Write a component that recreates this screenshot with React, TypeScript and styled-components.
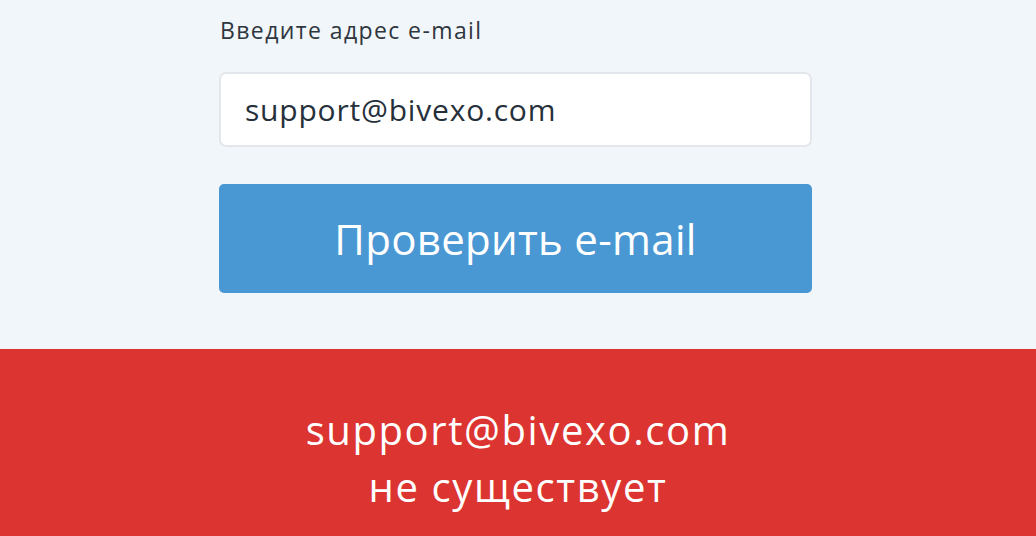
import React, { useState } from "react";
import styled, { createGlobalStyle } from "styled-components";

const GlobalStyle = createGlobalStyle`
  html, body {
    margin: 0;
    padding: 0;
    background: #f1f6fa;
    font-family: "Open Sans", "Liberation Sans", sans-serif;
  }
`;

const App: React.FC = () => {
  const [email, setEmail] = useState("support@bivexo.com");

  return (
    <>
      <GlobalStyle />
      <Page>
        <FormWrap>
          <Label htmlFor="email">Введите адрес e-mail</Label>
          <Input id="email" value={email} onChange={(e) => setEmail(e.target.value)} />
          <Button type="button">Проверить e-mail</Button>
        </FormWrap>
        <ErrorBar>
          <ErrorText>
            support@bivexo.com
            <br />
            не существует
          </ErrorText>
        </ErrorBar>
      </Page>
    </>
  );
};

export default App;

const Page = styled.div`
  width: 1036px;
  height: 536px;
  display: flex;
  flex-direction: column;
  overflow: hidden;
`;

const FormWrap = styled.div`
  width: 593px;
  margin-left: 219px;
  padding-top: 14px;
  display: flex;
  flex-direction: column;
  height: 349px;
  box-sizing: border-box;
`;

const Label = styled.label`
  font-size: 23px;
  line-height: 32px;
  letter-spacing: 1.4px;
  color: #2f3640;
  padding-left: 1px;
  margin-bottom: 26px;
`;

const Input = styled.input`
  box-sizing: border-box;
  height: 75px;
  width: 100%;
  border: 2px solid #e3e7eb;
  border-radius: 7px;
  background: #fff;
  padding: 0 24px;
  font-family: inherit;
  font-size: 30px;
  letter-spacing: 0.8px;
  color: #26303b;
  outline: none;
  margin-bottom: 37px;
`;

const Button = styled.button`
  height: 109px;
  width: 100%;
  border: none;
  border-radius: 5px;
  background: #4a98d3;
  color: #fff;
  font-family: inherit;
  font-size: 42px;
  letter-spacing: 0.3px;
  cursor: pointer;
`;

const ErrorBar = styled.div`
  flex: 1;
  background: #dc3430;
  display: flex;
  justify-content: center;
  padding-top: 52px;
  box-sizing: border-box;
`;

const ErrorText = styled.div`
  color: #fff;
  font-size: 40px;
  line-height: 57px;
  letter-spacing: 1.6px;
  text-align: center;
`;
